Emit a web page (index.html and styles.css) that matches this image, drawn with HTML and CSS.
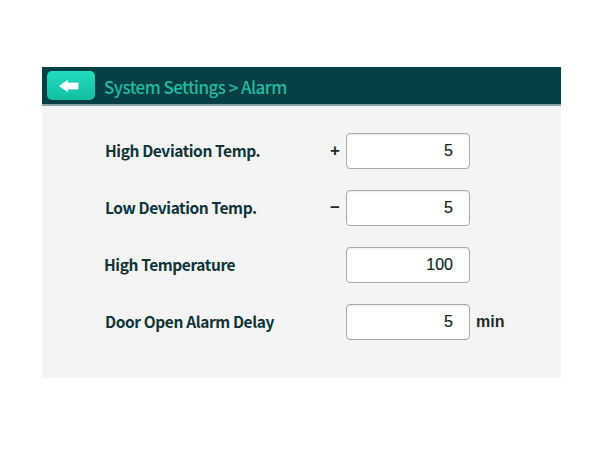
FILE: index.html
```html
<!DOCTYPE html>
<html>
<head>
<meta charset="utf-8">
<link rel="stylesheet" href="styles.css">
</head>
<body>
<div class="stage">
  <div class="panel">
    <div class="header">
      <button class="back">
        <svg width="20" height="12" viewBox="0 0 20 12"><path d="M0.5 6 L8.5 0.5 L8.5 3 L19 3 L19 9 L8.5 9 L8.5 11.5 Z" fill="#fff" stroke="#fff" stroke-width="0.8" stroke-linejoin="round"/></svg>
      </button>
      <div class="title">System Settings &gt; Alarm</div>
    </div>
    <div class="rows">
      <div class="label">High Deviation Temp.</div>
      <div class="sign">+</div>
      <div class="box">5</div>
      <div class="unit"></div>

      <div class="label">Low Deviation Temp.</div>
      <div class="sign">&minus;</div>
      <div class="box">5</div>
      <div class="unit"></div>

      <div class="label shift">High Temperature</div>
      <div class="sign"></div>
      <div class="box">100</div>
      <div class="unit"></div>

      <div class="label">Door Open Alarm Delay</div>
      <div class="sign"></div>
      <div class="box">5</div>
      <div class="unit">min</div>
    </div>
  </div>
</div>
</body>
</html>
```
FILE: styles.css
```css
html, body { margin: 0; padding: 0; background: #fff; }
.stage { width: 600px; height: 450px; padding-top: 67px; padding-left: 42px; box-sizing: border-box; }
.panel { width: 519px; height: 311px; background: #f4f4f4; }
.header {
  height: 37px;
  background: #063f44;
  border-bottom: 2px solid #8aa3a6;
  display: flex;
  align-items: center;
  padding-left: 5px;
}
.back {
  width: 48px; height: 29px;
  border: none; border-radius: 5px;
  background: linear-gradient(#22dcc0, #12bfa2);
  display: flex; align-items: center; justify-content: center;
  padding: 0; margin: 0;
}
.back svg { display: block; margin-left: -4px; }
.title {
  margin-left: 9px;
  font-family: "Noto Sans CJK SC", sans-serif;
  font-size: 17px;
  font-weight: 500;
  letter-spacing: -0.55px;
  color: #22bba0;
  padding-top: 1px;
}
.rows {
  display: grid;
  grid-template-columns: 225px 16px 124px auto;
  grid-auto-rows: 36px;
  row-gap: 21px;
  padding: 27px 0 0 63px;
  align-items: center;
}
.label {
  font-family: "Noto Sans CJK SC", sans-serif;
  font-weight: 700;
  font-size: 15.5px;
  letter-spacing: -0.4px;
  color: #0e3438;
  padding-bottom: 3px;
}
.label.shift { margin-left: -1px; }
.sign {
  font-family: "Liberation Sans", sans-serif;
  font-weight: 700;
  font-size: 17px;
  color: #1c2a2c;
}
.box {
  height: 36px;
  box-sizing: border-box;
  background: #fff;
  border: 1.5px solid #a9a9a9;
  border-radius: 4px;
  box-shadow: inset 0 1px 2px rgba(0,0,0,0.08);
  font-family: "Liberation Sans", sans-serif;
  font-size: 16px;
  color: #142426;
  text-align: right;
  padding-right: 16px;
  line-height: 34px;
  -webkit-text-stroke: 0.2px #142426;
}
.unit {
  padding-left: 6px;
  font-family: "Liberation Sans", sans-serif;
  font-weight: 700;
  font-size: 16px;
  color: #1c2a2c;
}
```
